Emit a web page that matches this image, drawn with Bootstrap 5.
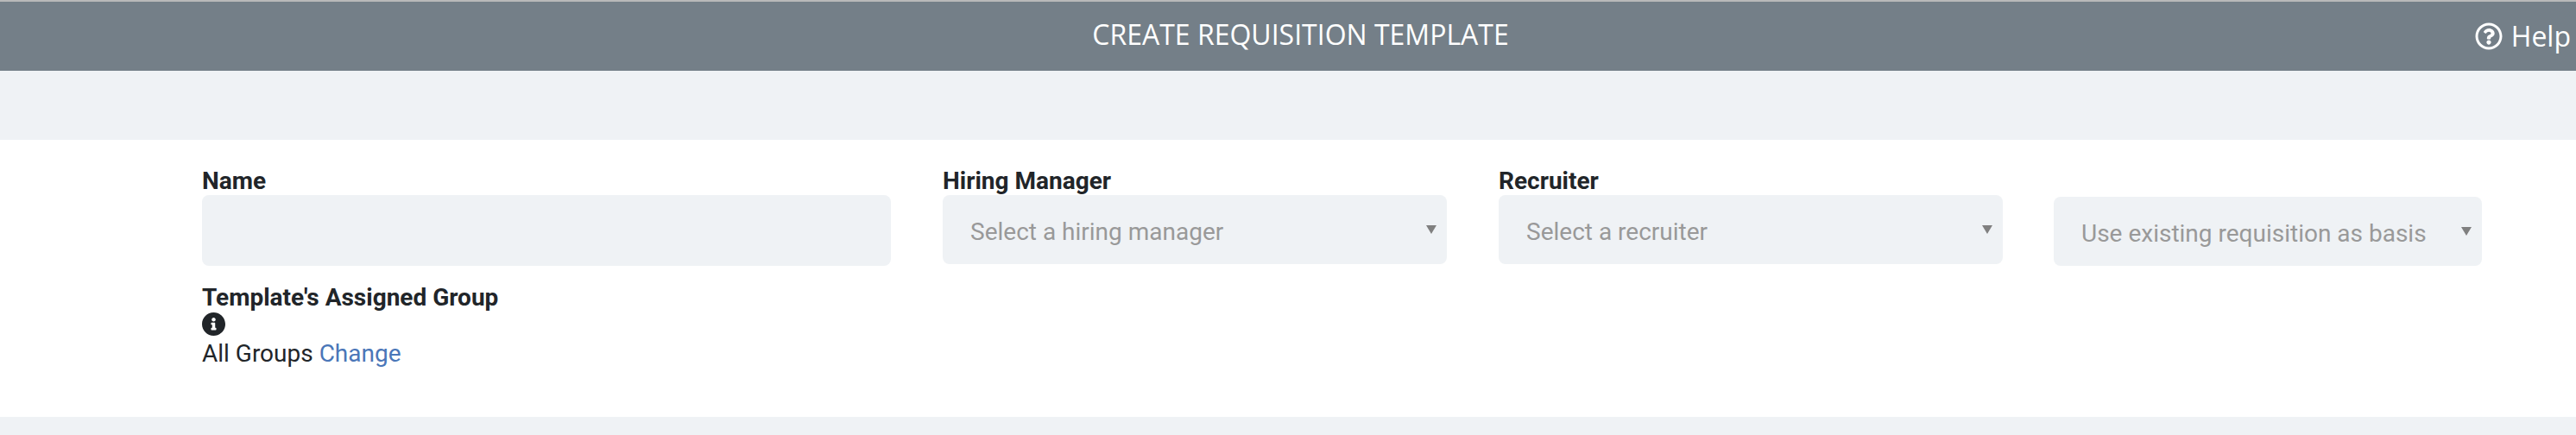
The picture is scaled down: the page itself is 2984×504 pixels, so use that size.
<!DOCTYPE html>
<html lang="en"><head><meta charset="utf-8"><title>Create Requisition Template</title>
<link href="https://cdn.jsdelivr.net/npm/bootstrap@5.3.0/dist/css/bootstrap.min.css" rel="stylesheet">
<style>
html,body{height:504px;overflow:hidden}
body{background:#eff2f5;font-family:Roboto,"Liberation Sans",sans-serif;font-size:28px;color:#212529}
.hdr{height:82px;background:#747f88;border-top:2px solid #b9b9b9;color:#fff;font-family:"Open Sans","Noto Sans",sans-serif;font-size:32px;position:relative;padding-bottom:5px;padding-left:29px}
.hdr-help{position:absolute;right:6px;top:0;bottom:0;font-size:32px;gap:10px}
.hdr-help svg{width:32px;height:32px;fill:#fff}
.band{height:80px}
.panel{background:#fff;height:321px;padding:31px 109px 0 234px}
.fld-name{width:798px;margin-right:60px}
.fld-sel{width:584px;margin-right:60px}
.fld-basis{width:496px;margin-left:-1px;padding-top:35px}
.lbl{display:block;font-weight:700;font-size:28px;line-height:33px;margin:0;color:#212529}
.inp,.inp:focus{background-color:#eff2f5;border:0;border-radius:8px;height:82px;box-shadow:none}
.sel,.sel:focus{display:block;width:100%;height:80px;border:0;border-radius:8px;box-shadow:none;background-color:#eff2f5;color:#999;font-size:28px;line-height:42px;padding:22px 50px 18px 32px;appearance:none;font-family:Roboto,sans-serif;
background-image:url("data:image/svg+xml,%3Csvg xmlns='http://www.w3.org/2000/svg' viewBox='0 0 12 10'%3E%3Cpath fill='%23808080' d='M0 0h12L6 10z'/%3E%3C/svg%3E");background-repeat:no-repeat;background-position:right 12px top 35px;background-size:12px 10px}
.grp{margin-top:16px;line-height:42px}
.grp .lbl{line-height:42px;margin-bottom:-4px}
.info{display:block;width:27px;height:27px;fill:#212529}
.grp-val{line-height:42px}
.chg{color:#4a76b8;text-decoration:none}
</style></head><body>
<header class="hdr d-flex align-items-center justify-content-center">
  <span>CREATE REQUISITION TEMPLATE</span>
  <a class="hdr-help d-flex align-items-center text-white text-decoration-none" href="#">
    <svg viewBox="0 0 512 512" aria-hidden="true"><path d="M256 8C119.043 8 8 119.083 8 256c0 136.997 111.043 248 248 248s248-111.003 248-248C504 119.083 392.957 8 256 8zm0 448c-110.532 0-200-89.431-200-200 0-110.495 89.472-200 200-200 110.491 0 200 89.471 200 200 0 110.53-89.431 200-200 200zm107.244-255.2c0 67.052-72.421 68.084-72.421 92.863V300c0 6.627-5.373 12-12 12h-45.647c-6.627 0-12-5.373-12-12v-8.659c0-35.745 27.1-50.034 47.579-61.516 17.561-9.845 28.324-16.541 28.324-29.579 0-17.246-21.999-28.693-39.784-28.693-23.189 0-33.894 10.977-48.942 29.969-4.057 5.12-11.46 6.071-16.666 2.124l-27.824-21.098c-5.107-3.872-6.251-11.066-2.644-16.363C184.846 131.491 214.94 112 261.794 112c49.071 0 101.45 38.304 101.45 88.8zM298 368c0 23.159-18.841 42-42 42s-42-18.841-42-42 18.841-42 42-42 42 18.841 42 42z"/></svg>
    <span>Help</span>
  </a>
</header>
<div class="band"></div>
<main class="panel">
  <form>
    <div class="d-flex align-items-start">
      <div class="fld-name"><label class="lbl" for="n">Name</label><input id="n" class="form-control inp" type="text"></div>
      <div class="fld-sel"><label class="lbl" for="h">Hiring Manager</label><select id="h" class="sel"><option>Select a hiring manager</option></select></div>
      <div class="fld-sel"><label class="lbl" for="r">Recruiter</label><select id="r" class="sel"><option>Select a recruiter</option></select></div>
      <div class="fld-basis"><select class="sel" aria-label="Use existing requisition as basis"><option>Use existing requisition as basis</option></select></div>
    </div>
    <div class="grp">
      <div class="lbl">Template's Assigned Group</div>
      <svg class="info" viewBox="8 8 496 496" aria-hidden="true"><path d="M256 8C119.043 8 8 119.083 8 256c0 136.997 111.043 248 248 248s248-111.003 248-248C504 119.083 392.957 8 256 8zm0 110c23.196 0 42 18.804 42 42s-18.804 42-42 42-42-18.804-42-42 18.804-42 42-42zm56 254c0 6.627-5.373 12-12 12h-88c-6.627 0-12-5.373-12-12v-24c0-6.627 5.373-12 12-12h12v-64h-12c-6.627 0-12-5.373-12-12v-24c0-6.627 5.373-12 12-12h64c6.627 0 12 5.373 12 12v100h12c6.627 0 12 5.373 12 12v24z"/></svg>
      <div class="grp-val">All Groups <a class="chg" href="#">Change</a></div>
    </div>
  </form>
</main>
<script src="https://cdn.jsdelivr.net/npm/bootstrap@5.3.0/dist/js/bootstrap.bundle.min.js"></script>
</body></html>
